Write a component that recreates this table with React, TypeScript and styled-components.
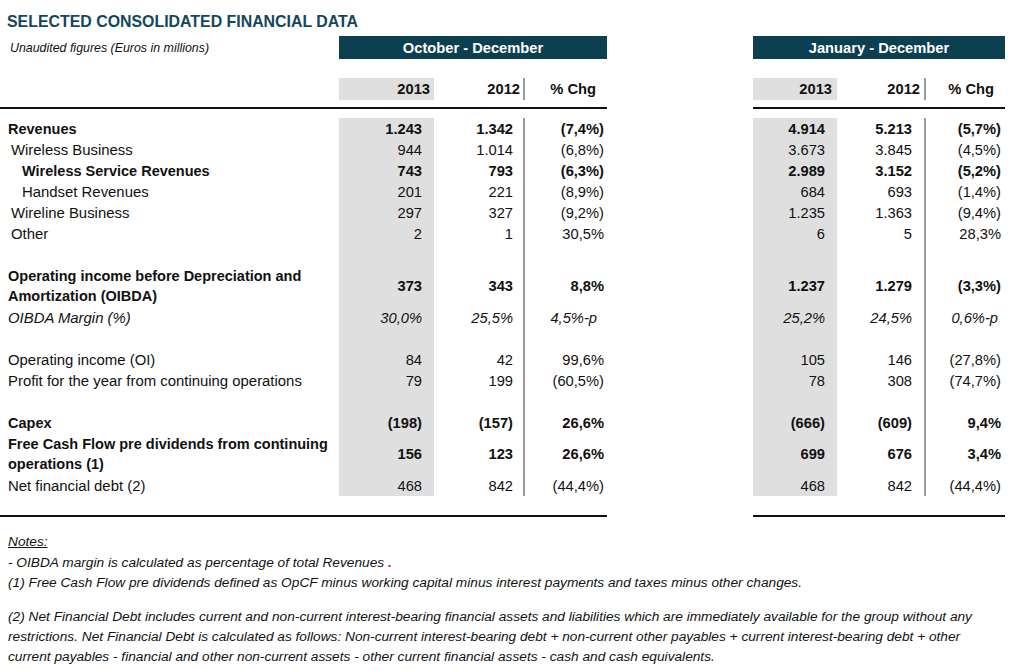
import React from 'react';
import styled, { createGlobalStyle } from 'styled-components';

const COLS = '339px 95px 89px 84px 146px 84px 87px 81px';
const GRAY = '#dfdfdf';
const LINE = '#9b9b9b';

const Global = createGlobalStyle`
  html, body { margin: 0; padding: 0; background: #fff; }
  body {
    font-family: "Liberation Sans", Arial, Helvetica, sans-serif;
    color: #111;
  }
`;

const Page = styled.div`
  width: 1012px;
  height: 670px;
  overflow: hidden;
  padding-top: 12px;
  box-sizing: border-box;
`;

const Title = styled.h1`
  margin: 0 0 0 7px;
  font-size: 15.9px;
  line-height: 20px;
  font-weight: 700;
  color: #14475a;
`;

const GridRow = styled.div<{ $h: number; $mt?: number }>`
  display: grid;
  grid-template-columns: ${COLS};
  height: ${(p) => p.$h}px;
  margin-top: ${(p) => p.$mt ?? 0}px;
`;

const Body = styled.div`
  margin-top: 9px;
`;

const Subtitle = styled.div`
  grid-column: 1;
  padding-left: 10px;
  display: flex;
  align-items: center;
  font-style: italic;
  font-size: 12.4px;
`;

const Band = styled.div<{ $col: string }>`
  grid-column: ${(p) => p.$col};
  background: #0c4051;
  color: #fff;
  font-weight: 700;
  font-size: 14.7px;
  display: flex;
  align-items: center;
  justify-content: center;
`;

const Cell = styled.div<{
  $col: number;
  $pr: number;
  $gray?: boolean;
  $line?: boolean;
  $bold?: boolean;
  $italic?: boolean;
}>`
  grid-column: ${(p) => p.$col};
  display: flex;
  align-items: center;
  justify-content: flex-end;
  box-sizing: border-box;
  padding-right: ${(p) => p.$pr}px;
  background: ${(p) => (p.$gray ? GRAY : 'transparent')};
  border-left: ${(p) => (p.$line ? `2px solid ${LINE}` : 'none')};
  font-size: 14.7px;
  font-weight: ${(p) => (p.$bold ? 700 : 400)};
  font-style: ${(p) => (p.$italic ? 'italic' : 'normal')};
  white-space: nowrap;
`;

const Label = styled.div<{ $indent: number; $bold?: boolean; $italic?: boolean }>`
  grid-column: 1;
  display: flex;
  flex-direction: column;
  justify-content: center;
  padding-left: ${(p) => p.$indent}px;
  font-size: ${(p) => (p.$bold ? 14.5 : 14.9)}px;
  line-height: 20px;
  font-weight: ${(p) => (p.$bold ? 700 : 400)};
  font-style: ${(p) => (p.$italic ? 'italic' : 'normal')};
  white-space: nowrap;
`;

const Rule = styled.div<{ $col: string }>`
  grid-column: ${(p) => p.$col};
  height: 2px;
  background: #111;
`;

const Notes = styled.div`
  margin-top: 15px;
  padding-left: 8px;
  font-style: italic;
  font-size: 13.7px;
  line-height: 20px;
  white-space: nowrap;
`;

const NoteLine = styled.p<{ $mt?: number }>`
  margin: ${(p) => p.$mt ?? 0}px 0 0 0;
`;

const Underlined = styled.span`
  text-decoration: underline;
`;

const RedDot = styled.span`
  color: #e3161b;
  font-weight: 700;
`;

type RowData = {
  label?: string[];
  indent?: number;
  bold?: boolean;
  italic?: boolean;
  tall?: boolean;
  vals?: string[];
};

const rows: RowData[] = [
  { label: ['Revenues'], indent: 8, bold: true, vals: ['1.243', '1.342', '(7,4%)', '4.914', '5.213', '(5,7%)'] },
  { label: ['Wireless Business'], indent: 11, vals: ['944', '1.014', '(6,8%)', '3.673', '3.845', '(4,5%)'] },
  { label: ['Wireless Service Revenues'], indent: 22, bold: true, vals: ['743', '793', '(6,3%)', '2.989', '3.152', '(5,2%)'] },
  { label: ['Handset Revenues'], indent: 22, vals: ['201', '221', '(8,9%)', '684', '693', '(1,4%)'] },
  { label: ['Wireline Business'], indent: 11, vals: ['297', '327', '(9,2%)', '1.235', '1.363', '(9,4%)'] },
  { label: ['Other'], indent: 11, vals: ['2', '1', '30,5%', '6', '5', '28,3%'] },
  {},
  {
    label: ['Operating income before Depreciation and', 'Amortization (OIBDA)'],
    indent: 8,
    bold: true,
    tall: true,
    vals: ['373', '343', '8,8%', '1.237', '1.279', '(3,3%)'],
  },
  { label: ['OIBDA Margin (%)'], indent: 8, italic: true, vals: ['30,0%', '25,5%', '4,5%-p', '25,2%', '24,5%', '0,6%-p'] },
  {},
  { label: ['Operating income (OI)'], indent: 8, vals: ['84', '42', '99,6%', '105', '146', '(27,8%)'] },
  { label: ['Profit for the year from continuing operations'], indent: 8, vals: ['79', '199', '(60,5%)', '78', '308', '(74,7%)'] },
  {},
  { label: ['Capex'], indent: 8, bold: true, vals: ['(198)', '(157)', '26,6%', '(666)', '(609)', '9,4%'] },
  {
    label: ['Free Cash Flow pre dividends from continuing', 'operations (1)'],
    indent: 8,
    bold: true,
    tall: true,
    vals: ['156', '123', '26,6%', '699', '676', '3,4%'],
  },
  { label: ['Net financial debt (2)'], indent: 8, vals: ['468', '842', '(44,4%)', '468', '842', '(44,4%)'] },
];

const valueCols: { col: number; pr: number; gray?: boolean; line?: boolean; prItalic?: number }[] = [
  { col: 2, pr: 12, gray: true },
  { col: 3, pr: 10 },
  { col: 4, pr: 3, line: true, prItalic: 10 },
  { col: 6, pr: 12, gray: true },
  { col: 7, pr: 12 },
  { col: 8, pr: 4, line: true, prItalic: 7 },
];

const headCols: { col: number; pr: number; gray?: boolean; line?: boolean; text: string }[] = [
  { col: 2, pr: 4, gray: true, text: '2013' },
  { col: 3, pr: 3, text: '2012' },
  { col: 4, pr: 11, line: true, text: '% Chg' },
  { col: 6, pr: 5, gray: true, text: '2013' },
  { col: 7, pr: 4, text: '2012' },
  { col: 8, pr: 11, line: true, text: '% Chg' },
];

function BodyRow({ row }: { row: RowData }) {
  return (
    <GridRow $h={row.tall ? 42 : 21}>
      <Label $indent={row.indent ?? 8} $bold={row.bold} $italic={row.italic}>
        {row.label?.map((l) => (
          <span key={l}>{l}</span>
        ))}
      </Label>
      {valueCols.map((c, i) => (
        <Cell
          key={c.col}
          $col={c.col}
          $pr={row.italic && c.prItalic ? c.prItalic : c.pr}
          $gray={c.gray}
          $line={c.line}
          $bold={row.bold}
          $italic={row.italic}
        >
          {row.vals ? row.vals[i] : ''}
        </Cell>
      ))}
    </GridRow>
  );
}

export default function App() {
  return (
    <>
      <Global />
      <Page>
        <Title>SELECTED CONSOLIDATED FINANCIAL DATA</Title>
        <GridRow $h={23} $mt={4}>
          <Subtitle>Unaudited figures (Euros in millions)</Subtitle>
          <Band $col="2 / 5">October - December</Band>
          <Band $col="6 / 9">January - December</Band>
        </GridRow>
        <GridRow $h={22} $mt={19}>
          {headCols.map((c) => (
            <Cell key={c.col} $col={c.col} $pr={c.pr} $gray={c.gray} $line={c.line} $bold>
              {c.text}
            </Cell>
          ))}
        </GridRow>
        <GridRow $h={2} $mt={7}>
          <Rule $col="1 / 5" />
          <Rule $col="6 / 9" />
        </GridRow>
        <Body>
          {rows.map((r, i) => (
            <BodyRow key={i} row={r} />
          ))}
        </Body>
        <GridRow $h={2} $mt={19}>
          <Rule $col="1 / 5" />
          <Rule $col="6 / 9" />
        </GridRow>
        <Notes>
          <NoteLine>
            <Underlined>Notes:</Underlined>
          </NoteLine>
          <NoteLine $mt={1}>
            - OIBDA margin is calculated as percentage of total Revenues <RedDot>.</RedDot>
          </NoteLine>
          <NoteLine>
            (1) Free Cash Flow pre dividends defined as OpCF minus working capital minus interest payments and taxes minus
            other changes.
          </NoteLine>
          <NoteLine $mt={14}>
            (2) Net Financial Debt includes current and non-current interest-bearing financial assets and liabilities which
            are immediately available for the group without any
            <br />
            restrictions. Net Financial Debt is calculated as follows: Non-current interest-bearing debt + non-current other
            payables + current interest-bearing debt + other
            <br />
            current payables - financial and other non-current assets - other current financial assets - cash and cash
            equivalents.
          </NoteLine>
        </Notes>
      </Page>
    </>
  );
}
